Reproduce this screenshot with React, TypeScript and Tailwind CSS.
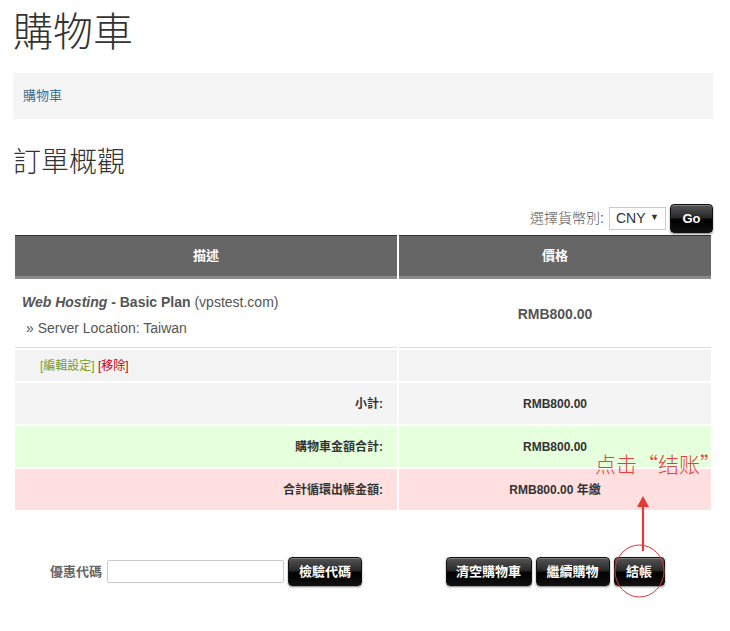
import React from "react";

const cjk = '"Liberation Sans", "Noto Sans CJK TC", Arial, sans-serif';

function BlackButton({ children, className = "" }: { children: React.ReactNode; className?: string }) {
  return (
    <button
      className={
        "h-[29px] rounded-[4px] border border-[#111] bg-[linear-gradient(to_bottom,#555_0%,#2a2a2a_45%,#000_55%,#111_100%)] text-white font-bold text-[13px] leading-none shadow-[0_1px_2px_rgba(0,0,0,0.5),inset_0_1px_0_rgba(255,255,255,0.25)] " +
        className
      }
      style={{ fontFamily: cjk }}
    >
      {children}
    </button>
  );
}

export default function App() {
  return (
    <div className="relative w-[730px] h-[631px] bg-white text-[#333] overflow-hidden" style={{ fontFamily: cjk }}>
      <div className="pl-[13px] w-[713px]">
        <h1 className="pt-[8px] text-[40px] leading-[48px] font-light text-[#333]">購物車</h1>
        <div className="mt-[17px] h-[46px] bg-[#f5f5f5] flex items-center pl-[10px] text-[13px] text-[#3b6f95]">購物車</div>
        <h2 className="mt-[26px] text-[28px] leading-[36px] font-light text-[#333]">訂單概觀</h2>

        <div className="mt-[23px] flex items-center justify-end h-[28px]">
          <span className="text-[14px] text-[#555] font-light mr-[5px]">選擇貨幣別:</span>
          <div className="w-[57px] h-[23px] border border-[#ccc] bg-white flex items-center justify-between px-[6px] text-[14px] text-[#333]">
            <span>CNY</span>
            <span className="text-[9px]">▼</span>
          </div>
          <BlackButton className="ml-[4px] w-[43px]">Go</BlackButton>
        </div>

        <table className="border-separate border-spacing-[2px] w-[700px] table-fixed mt-[1px]">
          <colgroup>
            <col className="w-[382px]" />
            <col className="w-[312px]" />
          </colgroup>
          <thead>
            <tr>
              <th className="h-[44px] bg-[#666] border-t border-[#333] border-b-[3px] border-b-[#8a8a8a] text-white text-[13px] font-bold">描述</th>
              <th className="h-[44px] bg-[#666] border-t border-[#333] border-b-[3px] border-b-[#8a8a8a] text-white text-[13px] font-bold">價格</th>
            </tr>
          </thead>
          <tbody>
            <tr>
              <td className="h-[67px] bg-white border-b border-[#ddd] pl-[7px] text-[14px] text-[#555] align-middle">
                <div className="leading-[20px] pt-[1px]">
                  <span className="font-bold italic">Web Hosting</span>
                  <span className="font-bold"> - Basic Plan</span> (vpstest.com)
                </div>
                <div className="leading-[20px] mt-[6px] pl-[4px]">» Server Location: Taiwan</div>
              </td>
              <td className="h-[67px] bg-white border-b border-[#ddd] text-center text-[14px] font-bold text-[#555]">RMB800.00</td>
            </tr>
            <tr>
              <td className="h-[31px] bg-[#f3f3f3] pl-[25px] text-[12px]">
                <span className="text-[#7a9a1a]">[編輯設定]</span> <span className="text-[#cc0000]">[移除]</span>
              </td>
              <td className="h-[31px] bg-[#f3f3f3]"></td>
            </tr>
            <tr>
              <td className="h-[41px] bg-[#f4f4f5] text-right pr-[14px] text-[12px] font-bold text-[#333]">小計:</td>
              <td className="h-[41px] bg-[#f4f4f5] text-center text-[12px] font-bold text-[#333]">RMB800.00</td>
            </tr>
            <tr>
              <td className="h-[41px] bg-[#e6ffdc] text-right pr-[14px] text-[12px] font-bold text-[#333]">購物車金額合計:</td>
              <td className="h-[41px] bg-[#e6ffdc] text-center text-[12px] font-bold text-[#333]">RMB800.00</td>
            </tr>
            <tr>
              <td className="h-[41px] bg-[#ffdfdf] text-right pr-[14px] text-[12px] font-bold text-[#333]">合計循環出帳金額:</td>
              <td className="h-[41px] bg-[#ffdfdf] text-center text-[12px] font-bold text-[#333]">RMB800.00 年繳</td>
            </tr>
          </tbody>
        </table>

        <div className="mt-[45px] flex pl-[2px]">
          <div className="w-[382px] flex items-center justify-center">
            <span className="text-[13px] font-bold text-[#666] mr-[5px]">優惠代碼</span>
            <input className="w-[177px] h-[23px] border border-[#ccc] rounded-[2px] bg-white" />
            <BlackButton className="ml-[4px] w-[74px]">檢驗代碼</BlackButton>
          </div>
          <div className="ml-[2px] w-[312px] flex items-center justify-center gap-[4px]">
            <BlackButton className="w-[86px]">清空購物車</BlackButton>
            <BlackButton className="w-[74px]">繼續購物</BlackButton>
            <BlackButton className="w-[51px]">結帳</BlackButton>
          </div>
        </div>
      </div>

      <div
        className="absolute left-[595px] top-[448px] text-[21px] leading-[30px] text-[#e5403c] font-light whitespace-nowrap"
        style={{ fontFamily: '"Noto Sans CJK SC", sans-serif' }}
      >
        点击“结账”
      </div>
      <svg className="absolute left-0 top-0 pointer-events-none" width="730" height="631">
        <line x1="643" y1="504" x2="643" y2="551" stroke="#e53935" strokeWidth="2.2" />
        <polygon points="643,496 637,507 649,507" fill="#e53935" />
        <ellipse cx="639.5" cy="571" rx="24.5" ry="26" fill="none" stroke="#d9363e" strokeWidth="1" />
      </svg>
    </div>
  );
}
